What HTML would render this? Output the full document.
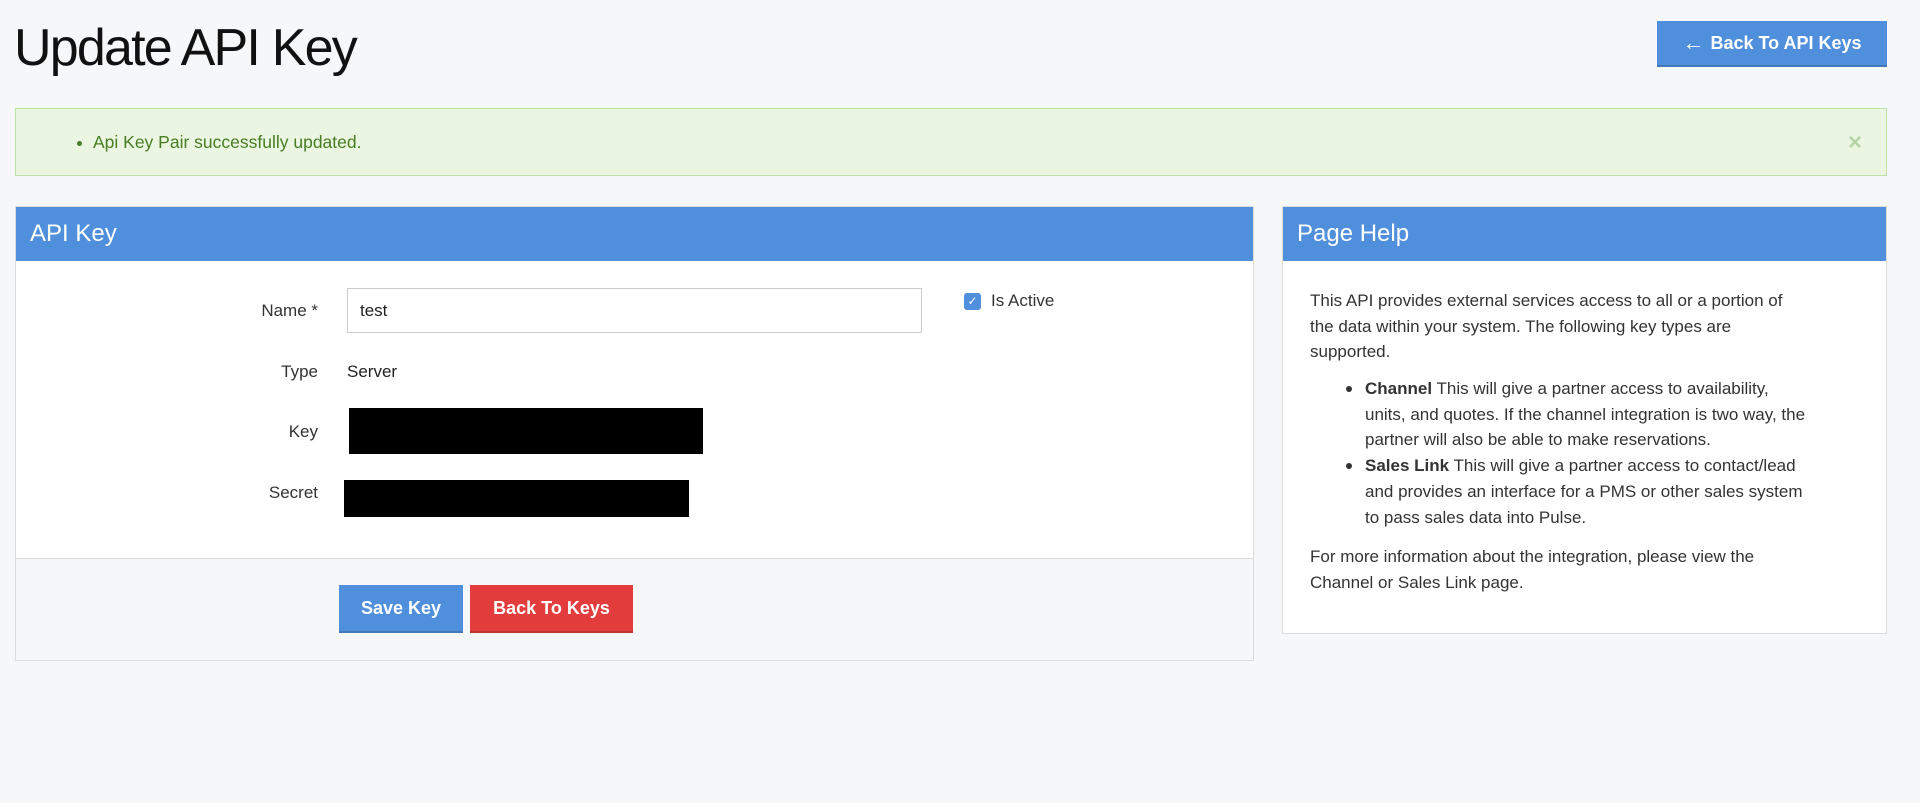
<!DOCTYPE html>
<html><head><meta charset="utf-8"><style>
*{box-sizing:border-box;margin:0;padding:0}
body{width:1920px;height:803px;background:#f6f7f9;font-family:"Liberation Sans",Arial,sans-serif;color:#333;position:relative;overflow:hidden}
.abs{position:absolute}
h1{position:absolute;left:14px;top:18px;font-size:52px;font-weight:normal;color:#111;letter-spacing:-1.8px;line-height:60px}
.btn{position:absolute;color:#fff;font-weight:bold;font-size:18px;display:flex;align-items:center;justify-content:center;border-bottom:2px solid rgba(0,0,0,.15)}
.blue{background:#4f8fdc}.red{background:#e23c3c}
.alert{left:15px;top:108px;width:1872px;height:68px;background:#eaf6e1;border:1px solid #bfe0a6}
.panel{background:#fff;border:1px solid #dcdcdc}
.ph{background:#4f8fdc;color:#fff;font-size:24px;height:54px;line-height:54px;padding-left:14px}
.lbl{position:absolute;font-size:17px;color:#333;text-align:right;width:120px}
.help{font-size:17px;line-height:25.7px;color:#333}
</style></head><body>
<h1>Update API Key</h1>
<div class="btn blue" style="left:1657px;top:21px;width:230px;height:46px"><span style="font-size:22px;margin-right:6px">←</span>Back To API Keys</div>

<div class="abs alert">
<div class="abs" style="left:61px;top:32px;width:5px;height:5px;border-radius:50%;background:#4a7c23"></div>
<div class="abs" style="left:77px;top:23px;font-size:17.5px;color:#4a7c23">Api Key Pair successfully updated.</div>
<div class="abs" style="left:1832px;top:20px;font-size:24px;color:#b8d3a8;font-weight:bold">×</div>
</div>

<div class="abs panel" style="left:15px;top:206px;width:1239px;height:455px">
<div class="ph">API Key</div>
<div class="abs" style="left:0;top:351px;width:1237px;height:102px;background:#f6f7f9;border-top:1px solid #ddd"></div>
</div>
<div class="lbl" style="left:198px;top:301px">Name *</div>
<div class="abs" style="left:347px;top:288px;width:575px;height:45px;border:1px solid #ccc;background:#fff;font-size:17px;padding:12px 12px;color:#222">test</div>
<div class="abs" style="left:964px;top:293px;width:17px;height:17px;border-radius:3px;background:#4f8fdc;color:#fff;font-size:12px;line-height:17px;text-align:center">✓</div>
<div class="abs" style="left:991px;top:291px;font-size:17px">Is Active</div>
<div class="lbl" style="left:198px;top:362px">Type</div>
<div class="abs" style="left:347px;top:362px;font-size:17px;color:#222">Server</div>
<div class="lbl" style="left:198px;top:422px">Key</div>
<div class="abs" style="left:349px;top:408px;width:354px;height:46px;background:#000"></div>
<div class="lbl" style="left:198px;top:483px">Secret</div>
<div class="abs" style="left:344px;top:480px;width:345px;height:37px;background:#000"></div>
<div class="btn blue" style="left:339px;top:585px;width:124px;height:48px">Save Key</div>
<div class="btn red" style="left:470px;top:585px;width:163px;height:48px">Back To Keys</div>

<div class="abs panel" style="left:1282px;top:206px;width:605px;height:428px">
<div class="ph">Page Help</div>
</div>
<div class="abs help" style="left:1310px;top:288px;width:570px">
This API provides external services access to all or a portion of<br>the data within your system. The following key types are<br>supported.
</div>
<div class="abs" style="left:1346px;top:386px;width:6px;height:6px;border-radius:50%;background:#333"></div>
<div class="abs" style="left:1346px;top:463px;width:6px;height:6px;border-radius:50%;background:#333"></div>
<div class="abs help" style="left:1365px;top:376px;width:520px">
<b>Channel</b> This will give a partner access to availability,<br>units, and quotes. If the channel integration is two way, the<br>partner will also be able to make reservations.<br>
<b>Sales Link</b> This will give a partner access to contact/lead<br>and provides an interface for a PMS or other sales system<br>to pass sales data into Pulse.
</div>
<div class="abs help" style="left:1310px;top:544px;width:570px">
For more information about the integration, please view the<br>Channel or Sales Link page.
</div>
</body></html>
